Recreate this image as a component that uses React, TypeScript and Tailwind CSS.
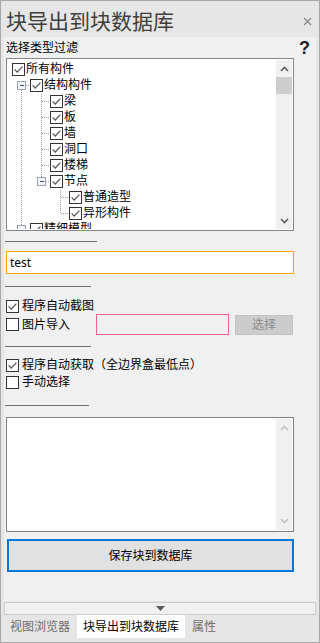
import React from "react";

type Seg = [number, number, number, number];

type TreeRow = { t: string; w: number; lines: Seg[]; exp?: number };

const ROWS: TreeRow[] = [
  { t: "所有构件", w: 4, lines: [] },
  { t: "结构构件", w: 22, lines: [[13, 8, 13, 16], [13, 8, 21, 8]], exp: 13 },
  { t: "梁", w: 42, lines: [[13, 0, 13, 16], [33, 0, 33, 16], [33, 8, 41, 8]] },
  { t: "板", w: 42, lines: [[13, 0, 13, 16], [33, 0, 33, 16], [33, 8, 41, 8]] },
  { t: "墙", w: 42, lines: [[13, 0, 13, 16], [33, 0, 33, 16], [33, 8, 41, 8]] },
  { t: "洞口", w: 42, lines: [[13, 0, 13, 16], [33, 0, 33, 16], [33, 8, 41, 8]] },
  { t: "楼梯", w: 42, lines: [[13, 0, 13, 16], [33, 0, 33, 16], [33, 8, 41, 8]] },
  { t: "节点", w: 42, lines: [[13, 0, 13, 16], [33, 0, 33, 8], [33, 8, 41, 8], [52, 12, 52, 16]], exp: 33 },
  { t: "普通造型", w: 61, lines: [[13, 0, 13, 16], [52, 0, 52, 16], [52, 8, 60, 8]] },
  { t: "异形构件", w: 61, lines: [[13, 0, 13, 16], [52, 0, 52, 8], [52, 8, 60, 8]] },
  { t: "精细模型", w: 22, lines: [[13, 0, 13, 16], [13, 8, 21, 8]], exp: 13 },
];

function Check({ on }: { on: boolean }) {
  return (
    <svg width="13" height="13" className="shrink-0" shapeRendering="geometricPrecision">
      <rect x="0.5" y="0.5" width="12" height="12" fill="#fff" stroke="#333" />
      {on && <path d="M2.6 6.4 L5.2 9.1 L10.4 3.6" fill="none" stroke="#555" strokeWidth="1.3" />}
    </svg>
  );
}

function Guides({ row }: { row: TreeRow }) {
  return (
    <svg width={row.w} height="16" className="shrink-0" shapeRendering="crispEdges">
      {row.lines.map(([x1, y1, x2, y2], i) => (
        <line key={i} x1={x1 + 0.5} y1={y1 + 0.5} x2={x2 + 0.5} y2={y2 + 0.5} stroke="#a0a0a0" strokeDasharray="1 1" />
      ))}
      {row.exp !== undefined && (
        <g>
          <rect x={row.exp - 3.5} y="4.5" width="8" height="8" fill="#f4f6fa" stroke="#9aa3b5" />
          <line x1={row.exp - 1.5} y1="8.5" x2={row.exp + 2.5} y2="8.5" stroke="#2e4a8a" />
        </g>
      )}
    </svg>
  );
}

function Chevron({ up, color }: { up: boolean; color: string }) {
  return (
    <svg width="9" height="6">
      <path d={up ? "M1 5 L4.5 1.5 L8 5" : "M1 1 L4.5 4.5 L8 1"} fill="none" stroke={color} strokeWidth="1.6" />
    </svg>
  );
}

function Sep({ w }: { w: string }) {
  return <div className={`ml-[1px] h-px bg-[#707070] ${w}`} />;
}

export default function App() {
  return (
    <div className="flex h-[643px] w-[320px] flex-col border border-[#a8a8a8] bg-[#e6e6e6] font-['Noto_Sans','Noto_Sans_CJK_SC',sans-serif] text-[12px] leading-[16px] text-black">
      {/* title */}
      <div className="flex h-[36px] shrink-0 items-start justify-between pl-[5px] pr-[7px] pt-[10px]">
        <span className="text-[21px] leading-[21px] text-[#3f3f3f]">块导出到块数据库</span>
        <svg width="9" height="9" className="mt-[6px]">
          <path d="M1 1 L8 8 M8 1 L1 8" stroke="#8a8a8a" strokeWidth="1.4" />
        </svg>
      </div>

      {/* panel */}
      <div className="mx-[3px] flex h-[564px] shrink-0 flex-col bg-[#f0f0f0]">
        <div className="mt-[3px] flex h-[16px] items-center justify-between pl-[2px] pr-[6px]">
          <span>选择类型过滤</span>
          <span className="font-['Liberation_Sans',sans-serif] text-[18px] font-bold leading-[16px] text-[#222]">?</span>
        </div>

        {/* tree */}
        <div className="ml-[2px] mt-[2px] flex h-[173px] w-[288px] border border-[#828790] bg-white p-px">
          <div className="flex-1 overflow-hidden pt-px">
            {ROWS.map((r) => (
              <div key={r.t} className="flex h-[16px] items-center whitespace-nowrap">
                <Guides row={r} />
                <Check on />
                <span className="ml-px">{r.t}</span>
              </div>
            ))}
          </div>
          <div className="flex w-[16px] flex-col items-center bg-[#f0f0f0]">
            <div className="flex h-[17px] items-center">
              <Chevron up color="#606060" />
            </div>
            <div className="h-[17px] w-full bg-[#cdcdcd]" />
            <div className="flex-1" />
            <div className="flex h-[17px] items-center">
              <Chevron up={false} color="#606060" />
            </div>
          </div>
        </div>

        <div className="mt-[10px]">
          <Sep w="w-[92px]" />
        </div>

        <div className="ml-[2px] mt-[9px] flex h-[23px] w-[288px] items-center border border-[#ffa500] bg-white pl-[3px]">
          test
        </div>

        <div className="mt-[12px]">
          <Sep w="w-[86px]" />
        </div>

        <div className="ml-[2px] mt-[11px] flex h-[16px] items-center gap-[3px]">
          <Check on />
          <span>程序自动截图</span>
        </div>
        <div className="ml-[2px] flex h-[21px] items-center">
          <Check on={false} />
          <span className="ml-[3px] w-[74px]">图片导入</span>
          <div className="h-[21px] w-[133px] border border-[#ec5f97] bg-[#f0f0f0]" />
          <div className="ml-[6px] flex h-[20px] w-[58px] items-center justify-center border border-[#c2c2c2] bg-[#cccccc] text-[#8a8a8a]">
            选择
          </div>
        </div>

        <div className="mt-[11px]">
          <Sep w="w-[86px]" />
        </div>

        <div className="ml-[2px] mt-[10px] flex h-[16px] items-center gap-[3px]">
          <Check on />
          <span>程序自动获取（全边界盒最低点）</span>
        </div>
        <div className="ml-[2px] mt-px flex h-[16px] items-center gap-[3px]">
          <Check on={false} />
          <span>手动选择</span>
        </div>

        <div className="mt-[15px]">
          <Sep w="w-[84px]" />
        </div>

        {/* text area */}
        <div className="ml-[2px] mt-[11px] flex h-[115px] w-[288px] border border-[#828282] bg-white p-px">
          <div className="flex-1" />
          <div className="flex w-[16px] flex-col items-center justify-between bg-[#f0f0f0] py-[6px]">
            <Chevron up color="#c2c2c2" />
            <Chevron up={false} color="#c2c2c2" />
          </div>
        </div>

        <div className="ml-[3px] mt-[7px] flex h-[33px] w-[287px] items-center justify-center border-2 border-[#0078d7] bg-[#e1e1e1]">
          保存块到数据库
        </div>
      </div>

      {/* collapse strip */}
      <div className="mx-[3px] mt-px flex h-[13px] shrink-0 items-center justify-center border border-[#cccccc] bg-[#f0f0f0]">
        <svg width="9" height="5">
          <path d="M0 0 L9 0 L4.5 5 Z" fill="#5a5a5a" />
        </svg>
      </div>

      {/* tabs */}
      <div className="flex h-[23px] items-center pl-[2px]">
        <div className="flex h-full items-center px-[7px] text-[#6d6d6d]">视图浏览器</div>
        <div className="flex h-full items-center bg-white px-[6px] text-black">块导出到块数据库</div>
        <div className="flex h-full items-center px-[7px] text-[#6d6d6d]">属性</div>
      </div>
    </div>
  );
}
